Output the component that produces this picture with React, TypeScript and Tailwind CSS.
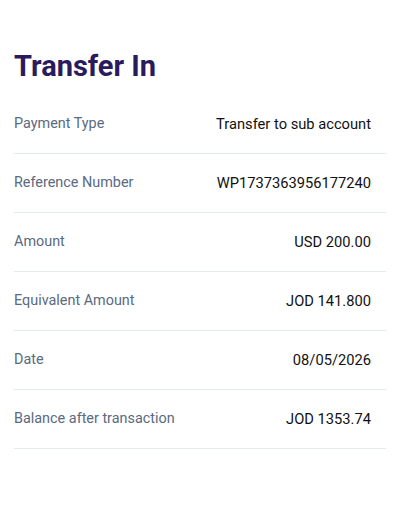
const rows = [
  { label: 'Payment Type', value: 'Transfer to sub account' },
  { label: 'Reference Number', value: 'WP1737363956177240' },
  { label: 'Amount', value: 'USD 200.00' },
  { label: 'Equivalent Amount', value: 'JOD 141.800' },
  { label: 'Date', value: '08/05/2026' },
  { label: 'Balance after transaction', value: 'JOD 1353.74' },
]

export default function App() {
  return (
    <main className="min-h-screen bg-white px-[14px] pt-[48px] font-['Roboto',sans-serif]">
      <h1 className="text-[29px] font-bold leading-[36px] text-[#2a1b5c] mb-[11px]">
        Transfer In
      </h1>

      <div className="flex flex-col">
        {rows.map((row) => (
          <div
            key={row.label}
            className="flex items-center justify-between py-[19px] pr-[15px] border-b border-[#e4e9f0]"
          >
            <span className="text-[14.4px] leading-[20px] text-[#5a6a80]">{row.label}</span>
            <span className="text-[14.7px] leading-[20px] text-[#111111]">{row.value}</span>
          </div>
        ))}
      </div>
    </main>
  )
}
